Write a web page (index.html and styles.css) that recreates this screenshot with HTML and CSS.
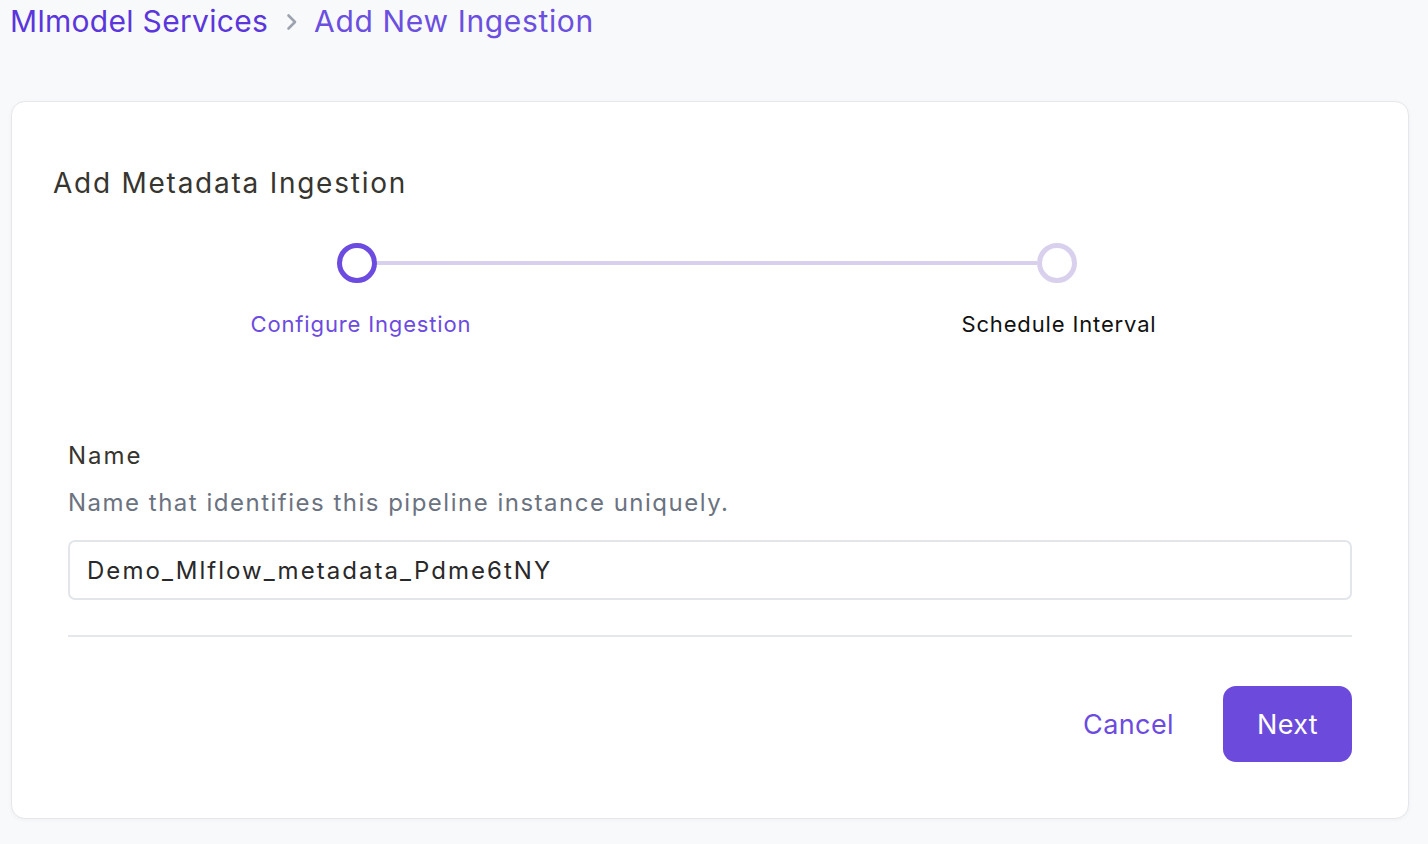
FILE: index.html
```html
<!DOCTYPE html>
<html lang="en">
<head>
<meta charset="utf-8">
<title>Add New Ingestion</title>
<link rel="stylesheet" href="styles.css">
</head>
<body>
<nav class="breadcrumb">
  <a class="crumb crumb-parent" href="#">Mlmodel Services</a>
  <svg class="crumb-sep" width="12" height="18" viewBox="0 0 12 18"><path d="M2.5 2.5 L9 9 L2.5 15.5" fill="none" stroke="#9ca3af" stroke-width="2.6" stroke-linecap="round" stroke-linejoin="round"/></svg>
  <span class="crumb crumb-current">Add New Ingestion</span>
</nav>
<main class="card">
  <h1 class="card-title">Add Metadata Ingestion</h1>
  <div class="stepper">
    <div class="step-track">
      <span class="step-dot step-dot-active"></span>
      <span class="step-line"></span>
      <span class="step-dot step-dot-todo"></span>
    </div>
    <div class="step-labels">
      <span class="step-label step-label-active">Configure Ingestion</span>
      <span class="step-label">Schedule Interval</span>
    </div>
  </div>
  <form class="form">
    <label class="field-label" for="name">Name</label>
    <p class="field-help">Name that identifies this pipeline instance uniquely.</p>
    <input class="field-input" id="name" type="text" value="Demo_Mlflow_metadata_Pdme6tNY">
    <hr class="divider">
    <div class="actions">
      <button type="button" class="btn-link">Cancel</button>
      <button type="button" class="btn-primary">Next</button>
    </div>
  </form>
</main>
</body>
</html>
```
FILE: styles.css
```css
* { box-sizing: border-box; }
html, body { margin: 0; padding: 0; }
body {
  background: #f8f9fa;
  font-family: Inter, "Noto Sans", "Liberation Sans", sans-serif;
  color: #37352f;
  width: 1428px;
  height: 844px;
  overflow: hidden;
  padding: 1px 19px 0 10px;
}
.breadcrumb {
  display: flex;
  align-items: center;
  height: 40px;
}
.crumb {
  font-size: 30px;
  line-height: 40px;
  text-decoration: none;
}
.crumb-parent { color: #5a36dc; letter-spacing: 0.3px; }
.crumb-current { color: #6b4fe0; letter-spacing: 0.65px; }
.crumb-sep { width: 12px; height: 18px; margin: 2px 16px 0 18px; }

.card {
  margin: 60px 0 0 1px;
  background: #fff;
  border: 1px solid #e5e7eb;
  border-radius: 14px;
  box-shadow: 0 1px 4px rgba(0,0,0,0.04);
  height: 718px;
  padding: 65px 0 55px;
}
.card-title {
  margin: 0;
  padding-left: 41px;
  font-size: 28px;
  line-height: 32px;
  font-weight: 400;
  letter-spacing: 1.75px;
  color: #37352f;
}
.stepper { margin-top: 44px; }
.step-track {
  display: flex;
  align-items: center;
  padding: 0 331px 0 325px;
}
.step-dot {
  width: 40px;
  height: 40px;
  border-radius: 50%;
  border: 5px solid #6b4be0;
  flex: none;
}
.step-dot-todo { border-color: #d9d0ee; }
.step-line {
  flex: 1;
  height: 4px;
  background: #d9d0ee;
}
.step-labels {
  display: grid;
  grid-template-columns: 1fr 1fr;
  margin-top: 26px;
}
.step-label {
  text-align: center;
  font-size: 22px;
  line-height: 30px;
  letter-spacing: 0.85px;
  color: #111;
}
.step-label-active { color: #6b4be0; }

.form {
  padding: 102px 56px 0;
  display: flex;
  flex-direction: column;
}
.field-label {
  font-size: 24px;
  line-height: 30px;
  letter-spacing: 2px;
  color: #37352f;
}
.field-help {
  margin: 17px 0 0;
  font-size: 24px;
  line-height: 30px;
  letter-spacing: 1.5px;
  color: #6b7280;
}
.field-input {
  margin-top: 22px;
  height: 60px;
  border: 2px solid #e2e5ea;
  border-radius: 7px;
  padding: 0 17px;
  font-family: inherit;
  font-size: 24px;
  letter-spacing: 2.05px;
  color: #292929;
  outline: none;
}
.divider {
  margin: 35px 0 0;
  border: 0;
  height: 2px;
  background: #e5e7eb;
}
.actions {
  margin-top: 49px;
  display: flex;
  justify-content: flex-end;
  align-items: center;
  gap: 49px;
}
.btn-link {
  border: 0;
  background: none;
  font-family: inherit;
  font-size: 27px;
  letter-spacing: 0.4px;
  color: #6b4be0;
  padding: 0;
  cursor: pointer;
}
.btn-primary {
  width: 129px;
  height: 76px;
  border: 0;
  border-radius: 13px;
  background: #6c4bdc;
  color: #fff;
  font-family: inherit;
  font-size: 27px;
  letter-spacing: 0.3px;
  cursor: pointer;
}
```
